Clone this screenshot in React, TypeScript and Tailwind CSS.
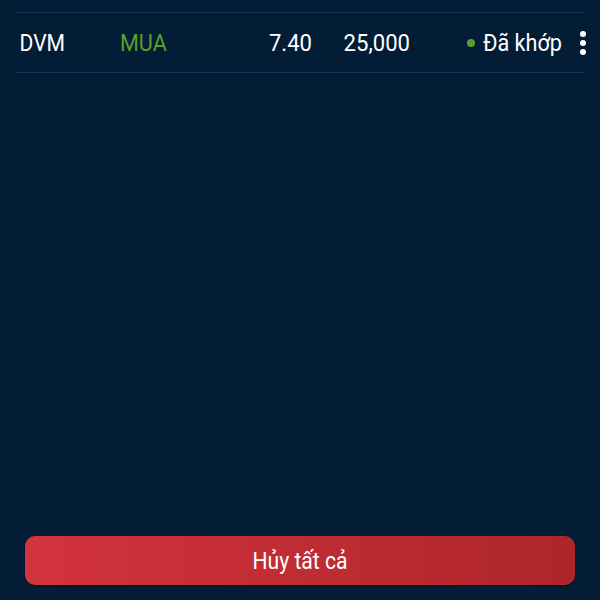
import React from "react";

interface Order {
  symbol: string;
  side: "MUA" | "BÁN";
  price: string;
  qty: string;
  status: string;
}

const orders: Order[] = [
  { symbol: "DVM", side: "MUA", price: "7.40", qty: "25,000", status: "Đã khớp" },
];

const OrderRow: React.FC<{ order: Order }> = ({ order }) => {
  return (
    <div className="flex items-center h-[60px] border-b border-[#1a3350] text-[24px] text-white">
      <span className="w-[104px] pl-[4px] scale-x-[0.88] origin-left">{order.symbol}</span>
      <span
        className={`w-[102px] scale-x-[0.9] origin-left ${
          order.side === "MUA" ? "text-[#5a9f2a]" : "text-[#d2323c]"
        }`}
      >
        {order.side}
      </span>
      <span className="w-[90px] text-right scale-x-[0.92] origin-right">{order.price}</span>
      <span className="w-[98px] text-right scale-x-[0.92] origin-right">{order.qty}</span>
      <span className="flex items-center ml-[57px]">
        <span className="w-[8px] h-[8px] rounded-full bg-[#5a9f2a] mr-[8px]"></span>
        <span className="scale-x-[0.9] origin-left">{order.status}</span>
      </span>
      <span className="ml-auto mr-[-2px] flex flex-col gap-[3px] items-center w-[6px]">
        <span className="w-[6px] h-[6px] rounded-full bg-white"></span>
        <span className="w-[6px] h-[6px] rounded-full bg-white"></span>
        <span className="w-[6px] h-[6px] rounded-full bg-white"></span>
      </span>
    </div>
  );
};

export default function App() {
  return (
    <div
      className="w-[600px] h-[600px] bg-[#031d36] flex flex-col overflow-hidden"
      style={{ fontFamily: "Roboto, 'Noto Sans', sans-serif" }}
    >
      <div className="mx-[16px] mt-[12px] border-t border-[#1a3350]">
        {orders.map((o) => (
          <OrderRow key={o.symbol} order={o} />
        ))}
      </div>
      <div className="flex-1"></div>
      <div className="px-[25px] pb-[15px]">
        <button className="w-full h-[49px] rounded-[10px] bg-gradient-to-r from-[#d3333d] to-[#ad252b] text-white text-[24px] shadow-[0_1px_2px_rgba(0,0,0,0.4)]">
          <span className="inline-block scale-x-[0.88]">Hủy tất cả</span>
        </button>
      </div>
    </div>
  );
}
